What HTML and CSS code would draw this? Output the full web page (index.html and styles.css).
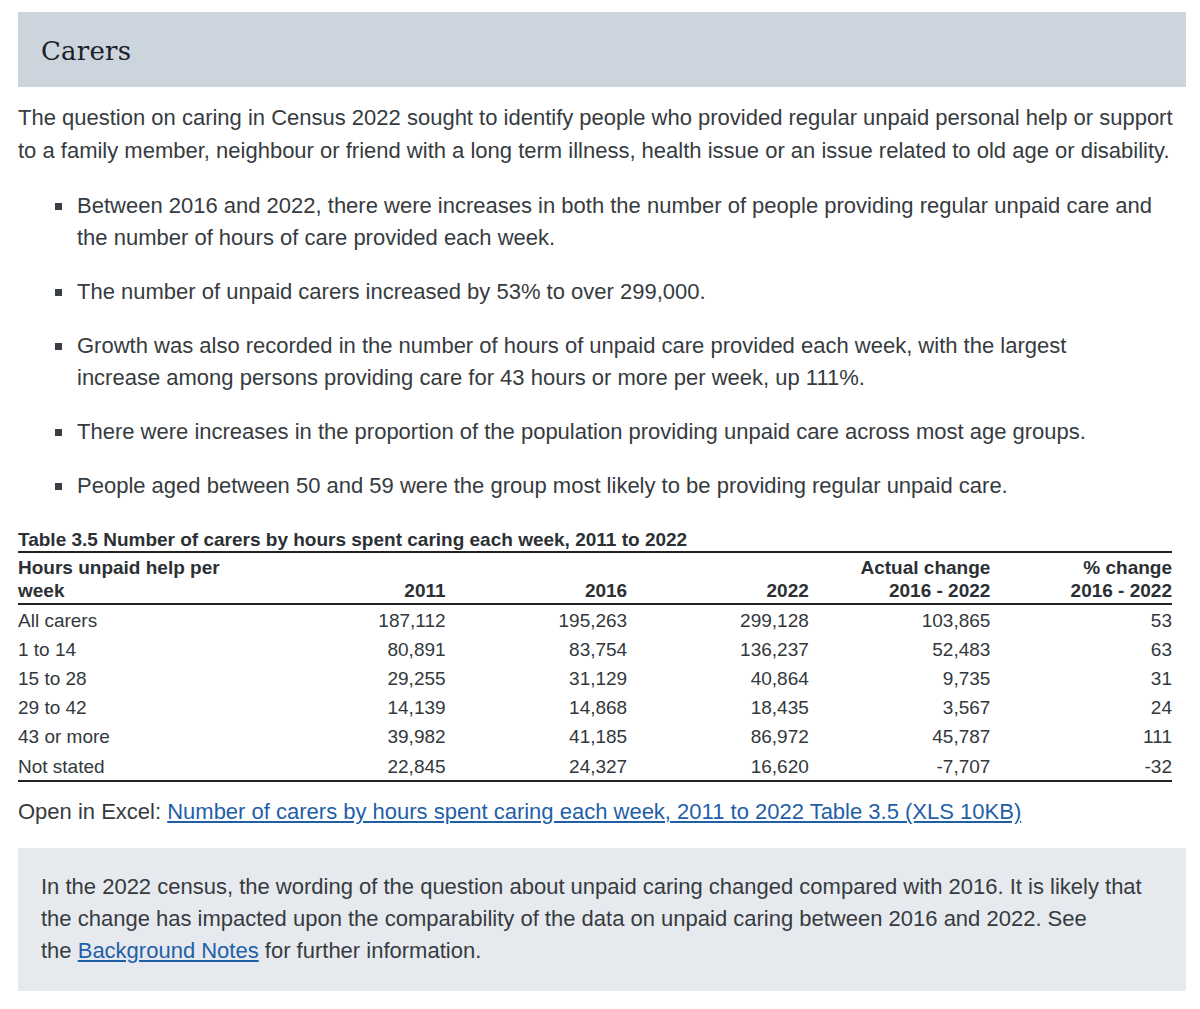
FILE: index.html
```html
<!DOCTYPE html>
<html lang="en">
<head>
<meta charset="utf-8">
<title>Carers</title>
<link rel="stylesheet" href="styles.css">
</head>
<body>
<main class="page">
  <header class="section-head">
    <h2 class="section-title">Carers</h2>
  </header>
  <p class="intro">The question on caring in Census 2022 sought to identify people who provided regular unpaid personal help or support to a family member, neighbour or friend with a long term illness, health issue or an issue related to old age or disability.</p>
  <ul class="points">
    <li>Between 2016 and 2022, there were increases in both the number of people providing regular unpaid care and the number of hours of care provided each week.</li>
    <li>The number of unpaid carers increased by 53% to over 299,000.</li>
    <li>Growth was also recorded in the number of hours of unpaid care provided each week, with the largest increase among persons providing care for 43 hours or more per week, up 111%.</li>
    <li>There were increases in the proportion of the population providing unpaid care across most age groups.</li>
    <li>People aged between 50 and 59 were the group most likely to be providing regular unpaid care.</li>
  </ul>
  <table class="data">
    <caption>Table 3.5 Number of carers by hours spent caring each week, 2011 to 2022</caption>
    <colgroup>
      <col class="c-label"><col><col><col><col><col>
    </colgroup>
    <thead>
      <tr>
        <th class="lbl">Hours unpaid help per week</th>
        <th>2011</th>
        <th>2016</th>
        <th>2022</th>
        <th>Actual change<br>2016 - 2022</th>
        <th>% change<br>2016 - 2022</th>
      </tr>
    </thead>
    <tbody>
      <tr><td class="lbl">All carers</td><td>187,112</td><td>195,263</td><td>299,128</td><td>103,865</td><td>53</td></tr>
      <tr><td class="lbl">1 to 14</td><td>80,891</td><td>83,754</td><td>136,237</td><td>52,483</td><td>63</td></tr>
      <tr><td class="lbl">15 to 28</td><td>29,255</td><td>31,129</td><td>40,864</td><td>9,735</td><td>31</td></tr>
      <tr><td class="lbl">29 to 42</td><td>14,139</td><td>14,868</td><td>18,435</td><td>3,567</td><td>24</td></tr>
      <tr><td class="lbl">43 or more</td><td>39,982</td><td>41,185</td><td>86,972</td><td>45,787</td><td>111</td></tr>
      <tr><td class="lbl">Not stated</td><td>22,845</td><td>24,327</td><td>16,620</td><td>-7,707</td><td>-32</td></tr>
    </tbody>
  </table>
  <p class="excel">Open in Excel: <a href="#">Number of carers by hours spent caring each week, 2011 to 2022 Table 3.5 (XLS 10KB)</a></p>
  <aside class="note">
    <p>In the 2022 census, the wording of the question about unpaid caring changed compared with 2016. It is likely that the change has impacted upon the comparability of the data on unpaid caring between 2016 and 2022. See the&nbsp;<a href="#">Background Notes</a> for further information.</p>
  </aside>
</main>
</body>
</html>
```
FILE: styles.css
```css
html, body {
  margin: 0;
  padding: 0;
  background: #ffffff;
}
body {
  font-family: "Liberation Sans", Arial, sans-serif;
  color: #363b40;
}
.page {
  width: 1168px;
  margin: 0 0 0 18px;
  padding-top: 12px;
}
.section-head {
  background: #ccd5de;
  height: 75px;
  display: flex;
  align-items: center;
  padding: 2px 23px 0;
  box-sizing: border-box;
}
.section-title {
  margin: 0;
  font-family: "DejaVu Serif", "Liberation Serif", serif;
  font-weight: normal;
  font-size: 26px;
  color: #1c2127;
  letter-spacing: 0.2px;
}
.intro {
  margin: 14px 0 0;
  font-size: 22px;
  line-height: 33px;
}
.points {
  list-style: none;
  margin: 23px 0 0;
  padding: 0 0 0 59px;
}
.points li {
  position: relative;
  font-size: 22px;
  line-height: 32px;
  margin-bottom: 22px;
  padding-right: 33px;
}
.points li::before {
  content: "";
  position: absolute;
  left: -22px;
  top: 13px;
  width: 7px;
  height: 7px;
  background: #3a3f45;
}
.data {
  width: 1154px;
  border-collapse: collapse;
  table-layout: fixed;
  font-size: 19px;
  margin-top: 27px;
  color: #33383d;
}
.data caption {
  text-align: left;
  font-weight: bold;
  font-size: 19px;
  line-height: 22px;
  color: #2b3035;
  caption-side: top;
  padding: 0;
}
.c-label {
  width: 246px;
}
.data th {
  font-weight: bold;
  text-align: right;
  vertical-align: bottom;
  line-height: 23px;
  padding: 3px 0 1px;
  border-top: 2px solid #222;
  border-bottom: 2px solid #222;
  color: #2b3035;
}
.data th.lbl,
.data td.lbl {
  text-align: left;
}
.data td {
  text-align: right;
  padding: 2px 0 0;
  height: 27.2px;
  line-height: 22px;
  vertical-align: middle;
}
.data tbody tr:last-child td {
  border-bottom: 2px solid #222;
}
.excel {
  margin: 14px 0 0;
  font-size: 22px;
  line-height: 32px;
}
a {
  color: #1f5fa8;
  text-decoration: underline;
}
.note {
  margin-top: 20px;
  background: #e6eaee;
  padding: 23px 23px 24px;
}
.note p {
  margin: 0;
  font-size: 22px;
  line-height: 32px;
}
```
